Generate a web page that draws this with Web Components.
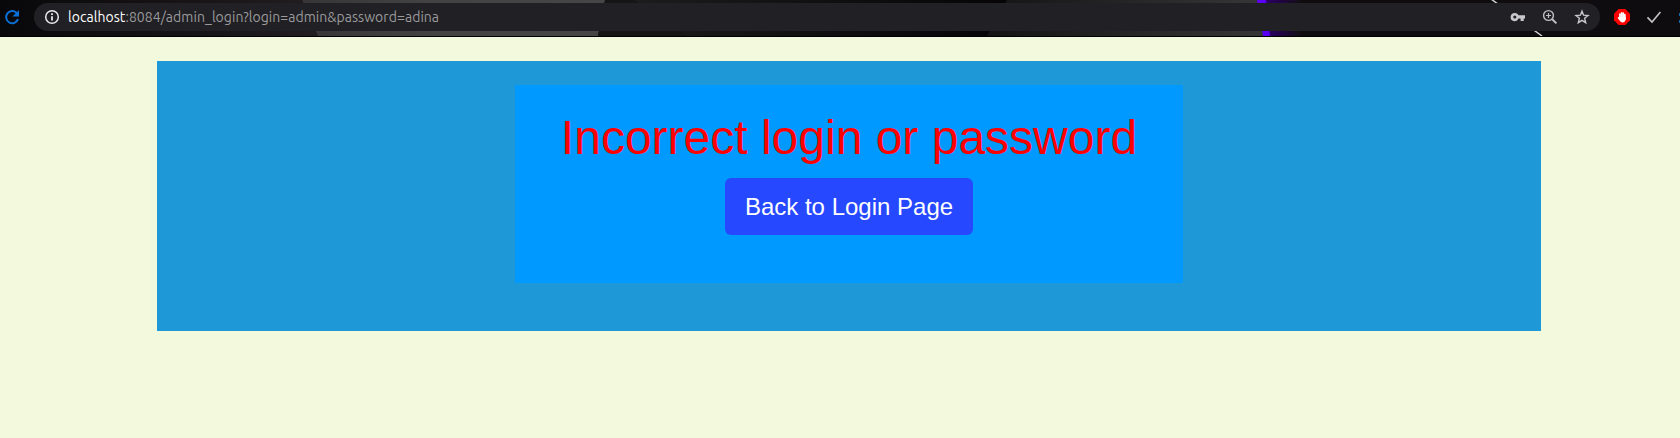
<!DOCTYPE html>
<html lang="en">
<head>
<meta charset="utf-8">
<title>Login</title>
<style>
  html, body { margin: 0; height: 100%; }
  body { background: #f3f9dc; font-family: "Liberation Sans", Arial, sans-serif; overflow: hidden; }
</style>
</head>
<body>
<browser-toolbar><span slot="host">localhost</span><span slot="path">:8084/admin_login?login=admin&amp;password=adina</span></browser-toolbar>
<login-panel>
  <login-message>
    <span slot="message">Incorrect login or password</span>
    <link-button slot="action">Back to Login Page</link-button>
  </login-message>
</login-panel>
<script>
class BaseElement extends HTMLElement {
  connectedCallback() {
    if (!this.shadowRoot) this.attachShadow({ mode: 'open' }).innerHTML = this.constructor.markup;
  }
}

const glyphs = {
  reload: '<svg width="16" height="16" viewBox="0 0 16 16"><path d="M14 10.2A6.1 6.1 0 1 1 12.4 3.7L13.6 5" fill="none" stroke="#0a6fd6" stroke-width="2"/><path d="M15 1V7.6H8.4z" fill="#0a6fd6"/></svg>',
  info: '<svg width="16" height="16" viewBox="0 0 16 16"><circle cx="8" cy="8" r="6.3" fill="none" stroke="#e8eaed" stroke-width="1.5"/><path d="M7.1 7.2h1.8v4.3H7.1zM7.1 4.3h1.8v1.8H7.1z" fill="#e8eaed"/></svg>',
  key: '<svg width="16" height="16" viewBox="0 0 16 16"><path fill-rule="evenodd" d="M4.8 3.9A4.1 4.1 0 0 1 8.5 6.3H15V9.6H13.7V12H10.6V9.6H8.5A4.1 4.1 0 1 1 4.8 3.9M4.8 6.4a1.6 1.6 0 1 0 0 3.2a1.6 1.6 0 0 0 0-3.2" fill="#c8c9cb"/></svg>',
  zoom: '<svg width="16" height="16" viewBox="0 0 16 16"><g fill="none" stroke="#bfc0c2"><circle cx="6.5" cy="6.5" r="4.9" stroke-width="1.4"/><path d="M10.2 10.2L14.4 14.4" stroke-width="2"/><path d="M4 6.5h5M6.5 4v5" stroke-width="1.2"/></g></svg>',
  star: '<svg width="16" height="16" viewBox="0 0 16 16"><path d="M8 2.2L9.6 6.2L14 6.5L10.6 9.3L11.7 13.7L8 11.3L4.3 13.7L5.4 9.3L2 6.5L6.4 6.2Z" fill="none" stroke="#c8c9cb" stroke-width="1.4"/></svg>',
  block: '<svg width="16" height="16" viewBox="0 0 16 16"><path d="M4.7 0h6.6L16 4.7v6.6L11.3 16H4.7L0 11.3V4.7z" fill="#f00"/><g stroke="#fff" stroke-width="1.6" stroke-linecap="round"><path d="M5.9 5v5M7.6 3.8v6M9.3 4.1v6M10.9 5.6v5"/></g><path d="M5.1 8h6.6v2.6q-.6 2.8-3.1 2.8-1.8 0-2.8-1.6L3.6 8.9l.8-.8z" fill="#fff"/></svg>',
  check: '<svg width="16" height="16" viewBox="0 0 16 16"><path d="M1.5 8.4L6 13L14.4 3" fill="none" stroke="#c4c4c6" stroke-width="1.6"/></svg>'
};

customElements.define('tool-icon', class extends HTMLElement {
  connectedCallback() {
    this.attachShadow({ mode: 'open' }).innerHTML =
      '<style>:host{display:block;flex:none;width:16px;height:16px}svg{display:block}</style>' + glyphs[this.getAttribute('name')];
  }
});

customElements.define('toolbar-art', class extends BaseElement {
  static markup = `<style>:host{display:block}svg{display:block}</style>
  <svg width="1680" height="36" viewBox="0 0 1680 36">
    <defs>
      <linearGradient id="a"><stop offset="0" stop-color="#080709"/><stop offset="1" stop-color="#211d20"/></linearGradient>
      <linearGradient id="b"><stop offset="0" stop-color="#373536"/><stop offset=".4" stop-color="#424242"/><stop offset="1" stop-color="#464646"/></linearGradient>
      <linearGradient id="c"><stop offset="0" stop-color="#1c1c1c"/><stop offset="1" stop-color="#060406"/></linearGradient>
      <linearGradient id="d"><stop offset="0" stop-color="#141414"/><stop offset="1" stop-color="#363636"/></linearGradient>
      <linearGradient id="e"><stop offset="0" stop-color="#30007a"/><stop offset=".4" stop-color="#260055"/><stop offset="1" stop-color="#120e13"/></linearGradient>
    </defs>
    <path d="M0 0H1680V36H0z" fill="#0f0c10"/>
    <path d="M0 0H302L318 36H0z" fill="url(#a)"/>
    <path d="M302 0H605L598 36H318z" fill="url(#b)"/>
    <path d="M605 0H634L686 36H598z" fill="#151515"/>
    <path d="M634 0H1007L987 36H686z" fill="url(#c)"/>
    <path d="M1007 0H1257L1264 36H987z" fill="url(#d)"/>
    <path d="M1257 0H1300V36H1264z" fill="url(#e)"/>
    <path d="M1257 0H1266L1270 36H1263z" fill="#5a00f5"/>
    <path d="M1491 -1L1542 36" stroke="#d0d0d0" stroke-width="1.5"/>
    <path d="M1679 13h1v3h-1zM1679 20h1v3h-1z" fill="#1766a8"/>
  </svg>`;
});

customElements.define('browser-toolbar', class extends BaseElement {
  static markup = `<style>
    :host{display:block;position:relative;height:36px;border-bottom:1px solid #000;background:#0f0c10;overflow:hidden}
    toolbar-art{position:absolute;inset:0}
    .row{position:relative;display:flex;align-items:center;height:28px;padding:3px 18px 0 4px}
    .pill{flex:1;display:flex;align-items:center;height:28px;box-sizing:border-box;margin:0 14px;padding:0 10px;border-radius:14px;background:#212024}
    .url{flex:1;margin-left:8px;font:14px/20px Ubuntu,"Noto Sans",sans-serif;letter-spacing:.05px;white-space:nowrap;color:#9b9b9d}
    .host{color:#fff}
    .actions{display:flex;gap:16px}
    .ext{display:flex;gap:16px}
  </style>
  <toolbar-art></toolbar-art>
  <div class="row">
    <tool-icon name="reload"></tool-icon>
    <div class="pill">
      <tool-icon name="info"></tool-icon>
      <div class="url"><span class="host"><slot name="host"></slot></span><slot name="path"></slot></div>
      <div class="actions"><tool-icon name="key"></tool-icon><tool-icon name="zoom"></tool-icon><tool-icon name="star"></tool-icon></div>
    </div>
    <div class="ext"><tool-icon name="block"></tool-icon><tool-icon name="check"></tool-icon></div>
  </div>`;
});

customElements.define('login-panel', class extends BaseElement {
  static markup = `<style>
    :host{display:flex;justify-content:center;align-items:flex-start;box-sizing:border-box;height:270px;margin:24px 139px 0 157px;padding-top:24px;background:#1e98d7}
  </style><slot></slot>`;
});

customElements.define('login-message', class extends BaseElement {
  static markup = `<style>
    :host{display:flex;flex-direction:column;align-items:center;box-sizing:border-box;width:668px;height:198px;padding-top:24px;background:#0099ff}
    .title{font-size:48px;line-height:57px;color:#f00;white-space:nowrap;margin-bottom:12px}
  </style><div class="title"><slot name="message"></slot></div><slot name="action"></slot>`;
});

customElements.define('link-button', class extends BaseElement {
  static markup = `<style>
    :host{display:block}
    button{display:block;width:248px;height:57px;padding:0;border:0;border-radius:6px;background:#2648ff;color:#fff;font:24px/36px "Liberation Sans",Arial,sans-serif;white-space:nowrap}
  </style><button type="button"><slot></slot></button>`;
});
</script>
</body>
</html>
